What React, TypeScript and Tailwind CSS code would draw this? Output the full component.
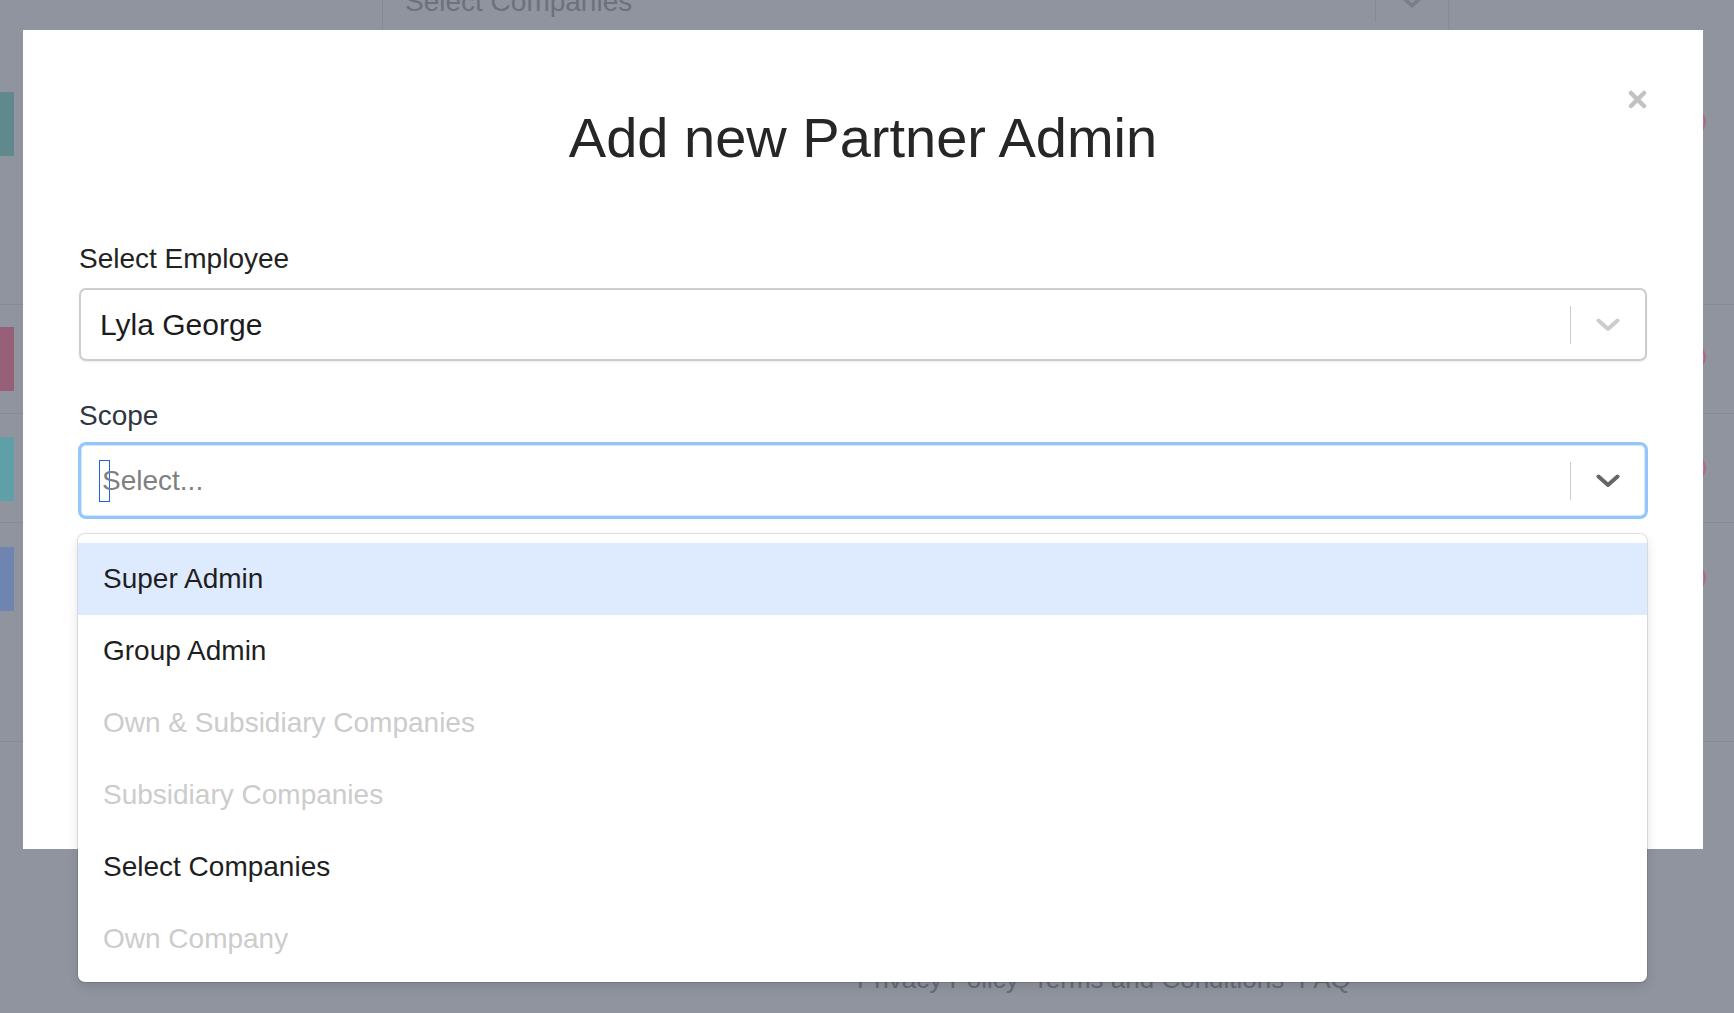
import type { ReactNode } from 'react'

const options = [
  { label: 'Super Admin', disabled: false, active: true },
  { label: 'Group Admin', disabled: false, active: false },
  { label: 'Own & Subsidiary Companies', disabled: true, active: false },
  { label: 'Subsidiary Companies', disabled: true, active: false },
  { label: 'Select Companies', disabled: false, active: false },
  { label: 'Own Company', disabled: true, active: false },
]

function Chevron({ className }: { className: string }) {
  return (
    <svg viewBox="0 0 24 14" className={className} fill="none">
      <path d="M2.5 2.5 L12 11 L21.5 2.5" stroke="currentColor" strokeWidth="4" strokeLinecap="round" strokeLinejoin="round" />
    </svg>
  )
}

function Indicator({ dark }: { dark?: boolean }) {
  return (
    <>
      <span className="h-[38px] w-px bg-[#cccccc]" />
      <span className="flex w-[74px] justify-center">
        <Chevron className={`h-[14px] w-[24px] ${dark ? 'text-[#666666]' : 'text-[#cccccc]'}`} />
      </span>
    </>
  )
}

// Background page row: colour tab on the left, outlined status dot on the right
function PageRow({ h, barTop, dotTop, bar, children }: { h: string; barTop: string; dotTop: string; bar: string; children?: ReactNode }) {
  return (
    <div className={`flex justify-between border-b border-[#868a94] ${h}`}>
      <div className={`h-[64px] w-[14px] ${barTop} ${bar}`} />
      {children}
      <div className={`mr-[28px] h-[24px] w-[24px] rounded-full border-2 border-[#b4677c] ${dotTop}`} />
    </div>
  )
}

export default function App() {
  return (
    <div className="relative h-[1013px] w-full overflow-hidden bg-[#90949e] font-['Liberation_Sans',Arial,sans-serif]">
      {/* Page behind the overlay */}
      <div className="flex h-full flex-col">
        <div className="-mt-[26px] ml-[382px] flex h-[56px] w-[1067px] items-center border-x border-[#868a94]">
          <span className="flex-1 pl-[22px] text-[28px] leading-[30px] text-[#6d717b]">Select Companies</span>
          <span className="h-[40px] w-px bg-[#858993]" />
          <span className="flex w-[72px] justify-center">
            <Chevron className="h-[14px] w-[22px] text-[#7a7e88]" />
          </span>
        </div>
        <PageRow h="h-[275px]" barTop="mt-[62px]" dotTop="mt-[80px]" bar="bg-[#5f898d]" />
        <PageRow h="h-[109px]" barTop="mt-[22px]" dotTop="mt-[40px]" bar="bg-[#985f78]" />
        <PageRow h="h-[109px]" barTop="mt-[23px]" dotTop="mt-[42px]" bar="bg-[#5f9fa8]" />
        <PageRow h="h-[219px]" barTop="mt-[24px]" dotTop="mt-[43px]" bar="bg-[#6f84ae]" />
        <div className="mt-[222px] pl-[857px] text-[26px] leading-[30px] text-[#676b75]">
          Privacy Policy&nbsp; Terms and Conditions&nbsp; FAQ
        </div>
      </div>

      {/* Modal */}
      <div className="absolute left-[23px] top-[30px] flex h-[819px] w-[1680px] flex-col bg-white pl-[56px] pr-[56px] pt-[76px]">
        <button className="absolute right-[56px] top-[60px] h-[19px] w-[19px] text-[#c2c2c2]" aria-label="Close">
          <svg viewBox="0 0 19 19" className="h-[19px] w-[19px]">
            <path d="M3 3 L16 16 M16 3 L3 16" stroke="currentColor" strokeWidth="4.5" strokeLinecap="round" />
          </svg>
        </button>

        <h2 className="h-[64px] text-center text-[56px] font-normal leading-[64px] text-[#262626]">Add new Partner Admin</h2>

        <label className="mt-[72px] text-[28px] leading-[34px] text-[#222222]">Select Employee</label>
        <div className="mt-[12px] flex h-[73px] items-center rounded-[7px] border-2 border-[#cdcdcd] shadow-[0_1px_2px_rgba(0,0,0,0.08)]">
          <span className="flex-1 pl-[19px] text-[30px] text-[#1c1c1c]">Lyla George</span>
          <Indicator />
        </div>

        <label className="mt-[38px] text-[28px] leading-[34px] text-[#2f3742]">Scope</label>
        <div className="relative -mx-[1px] mt-[9px]">
          <div className="flex h-[77px] items-center rounded-[8px] border-[3px] border-[#93c7fc] shadow-[inset_0_0_0_1px_#d6e9ff]">
            <div className="flex flex-1 items-center pl-[18px]">
              <span className="h-[42px] w-[11px] border-[1.5px] border-[#2162e6]" />
              <span className="-ml-[8px] text-[28px] text-[#808080]">Select...</span>
            </div>
            <Indicator dark />
          </div>

          {/* Open menu */}
          <div className="absolute left-0 right-[1px] top-[calc(100%+15px)] z-10 rounded-[7px] bg-white pb-[7px] pt-[9px] shadow-[0_0_0_1px_rgba(0,0,0,0.1),0_4px_11px_rgba(0,0,0,0.12)]">
            {options.map((o) => (
              <div
                key={o.label}
                className={`flex h-[72px] items-center pl-[25px] text-[28px] ${o.active ? 'bg-[#deebff]' : ''} ${o.disabled ? 'text-[#cccccc]' : 'text-[#1f1f1f]'}`}
              >
                {o.label}
              </div>
            ))}
          </div>
        </div>
      </div>
    </div>
  )
}
